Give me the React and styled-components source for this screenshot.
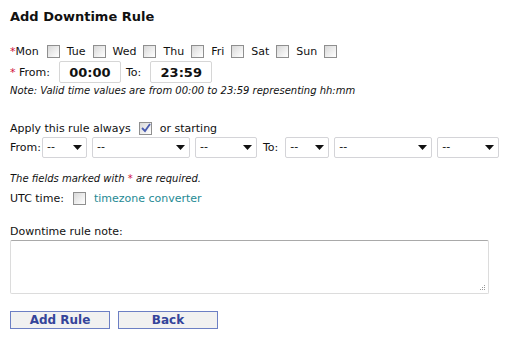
import React from 'react'
import styled, { createGlobalStyle } from 'styled-components'

const Global = createGlobalStyle`
    body {
        margin: 0;
        background: #fff;
        font-family: "DejaVu Sans", Verdana, sans-serif;
        font-size: 11px;
        color: #111;
    }
`

const Page = styled.div`
    width: 506px;
    height: 342px;
    padding: 8px 10px 0 10px;
    box-sizing: border-box;
`

const Title = styled.h1`
    margin: 0 0 17px 0;
    font-size: 13px;
    font-weight: bold;
    line-height: 18px;
`

const Row = styled.div`
    display: flex;
    align-items: center;
    height: ${p => p.h || 18}px;
    margin-top: ${p => p.mt || 0}px;
`

const Star = styled.span`
    color: #d0103a;
`

const Day = styled.label`
    display: flex;
    align-items: center;
`

const Check = styled.span`
    display: inline-block;
    width: 11px;
    height: 11px;
    border: 1px solid #8f8f8f;
    background: linear-gradient(135deg, #d8d8d8 0%, #f4f4f4 70%, #fff 100%);
    margin: 0 ${p => p.mr ?? 7}px 0 ${p => p.ml ?? 7}px;
    position: relative;
    flex: none;
`

const Tick = styled.svg`
    position: absolute;
    left: 1px;
    top: 0px;
`

const TimeBox = styled.div`
    width: 60px;
    height: 20px;
    border: 1px solid #d6d6d6;
    border-radius: 2px;
    display: flex;
    align-items: center;
    justify-content: center;
    font-size: 13px;
    font-weight: bold;
    margin: 0 5px 0 ${p => p.ml || 0}px;
`

const Note = styled.div`
    font-style: italic;
    font-size: 10px;
    height: 14px;
    line-height: 14px;
    margin-top: ${p => p.mt || 0}px;
`

const Gap = styled.span`
    width: ${p => p.w}px;
    flex: none;
`

const SelectBox = styled.div`
    position: relative;
    width: ${p => p.w}px;
    height: 21px;
    box-sizing: border-box;
    border: 1px solid #d4d4d8;
    border-radius: 2px;
    margin-right: 5px;
    padding-left: 4px;
    padding-bottom: 2px;
    display: flex;
    align-items: center;
    font-size: 11px;
    flex: none;
`

const Arrow = styled.svg`
    position: absolute;
    right: 4px;
    top: 7px;
`

const Link = styled.a`
    color: #1e8a94;
    text-decoration: none;
`

const NoteArea = styled.div`
    width: 479px;
    height: 54px;
    box-sizing: border-box;
    border: 1px solid #dcdcdc;
    border-top-color: #a9a9a9;
    border-radius: 2px;
    margin-top: 1px;
    position: relative;
`

const Grip = styled.svg`
    position: absolute;
    right: 2px;
    bottom: 2px;
`

const Buttons = styled.div`
    display: flex;
    gap: 8px;
    margin-top: 17px;
`

const Button = styled.button`
    width: 100px;
    height: 18px;
    padding: 0;
    border: 1px solid #6c7fc4;
    background: #f1f1f1;
    color: #34449a;
    font-family: "DejaVu Sans", Verdana, sans-serif;
    font-size: 12px;
    font-weight: bold;
    line-height: 16px;
`

const Box = ({ checked, ml, mr }) => (
    <Check ml={ml} mr={mr}>
        {checked &&
            <Tick width="10" height="10" viewBox="0 0 10 10">
                <path d="M1 5 L4 8 L9 1" stroke="#4a5cb0" strokeWidth="1.8" fill="none" />
            </Tick>
        }
    </Check>
)

const Select = ({ w }) => (
    <SelectBox w={w}>
        --
        <Arrow width="9" height="5" viewBox="0 0 9 5">
            <path d="M0 0 L9 0 L4.5 5 Z" fill="#111" />
        </Arrow>
    </SelectBox>
)

const days = ['Tue', 'Wed', 'Thu', 'Fri', 'Sat', 'Sun']

const App = () => {
    return (
        <Page>
            <Global />
            <Title>Add Downtime Rule</Title>

            <Row h={16}>
                <Day><Star>*</Star>Mon<Box ml={8} /></Day>
                {days.map(d => (
                    <Day key={d}>{d}<Box /></Day>
                ))}
            </Row>
            <Row h={24} mt={1}>
                <Star>*</Star>&nbsp;From:
                <TimeBox ml={9}>00:00</TimeBox>
                To:
                <TimeBox ml={9}>23:59</TimeBox>
            </Row>
            <Note>Note: Valid time values are from 00:00 to 23:59 representing hh:mm</Note>

            <Row h={16} mt={22}>
                Apply this rule always <Box checked ml={8} mr={8} /> or starting
            </Row>
            <Row h={21} mt={1}>
                From:<Gap w={1} />
                <Select w={45} />
                <Select w={98} />
                <Select w={62} />
                <Gap w={1} />To:<Gap w={7} />
                <Select w={44} />
                <Select w={98} />
                <Select w={62} />
            </Row>

            <Note mt={14}>The fields marked with <Star>*</Star> are required.</Note>
            <Row h={18} mt={3}>
                UTC time: <Box ml={9} mr={8} /> <Link href="#">timezone converter</Link>
            </Row>

            <Row h={16} mt={16}>Downtime rule note:</Row>
            <NoteArea>
                <Grip width="7" height="7" viewBox="0 0 7 7">
                    <rect x="5" y="1" width="1" height="1" fill="#999" />
                    <rect x="3" y="3" width="1" height="1" fill="#999" />
                    <rect x="5" y="3" width="1" height="1" fill="#999" />
                    <rect x="1" y="5" width="1" height="1" fill="#999" />
                    <rect x="3" y="5" width="1" height="1" fill="#999" />
                    <rect x="5" y="5" width="1" height="1" fill="#999" />
                </Grip>
            </NoteArea>

            <Buttons>
                <Button>Add Rule</Button>
                <Button>Back</Button>
            </Buttons>
        </Page>
    )
}

export default App
